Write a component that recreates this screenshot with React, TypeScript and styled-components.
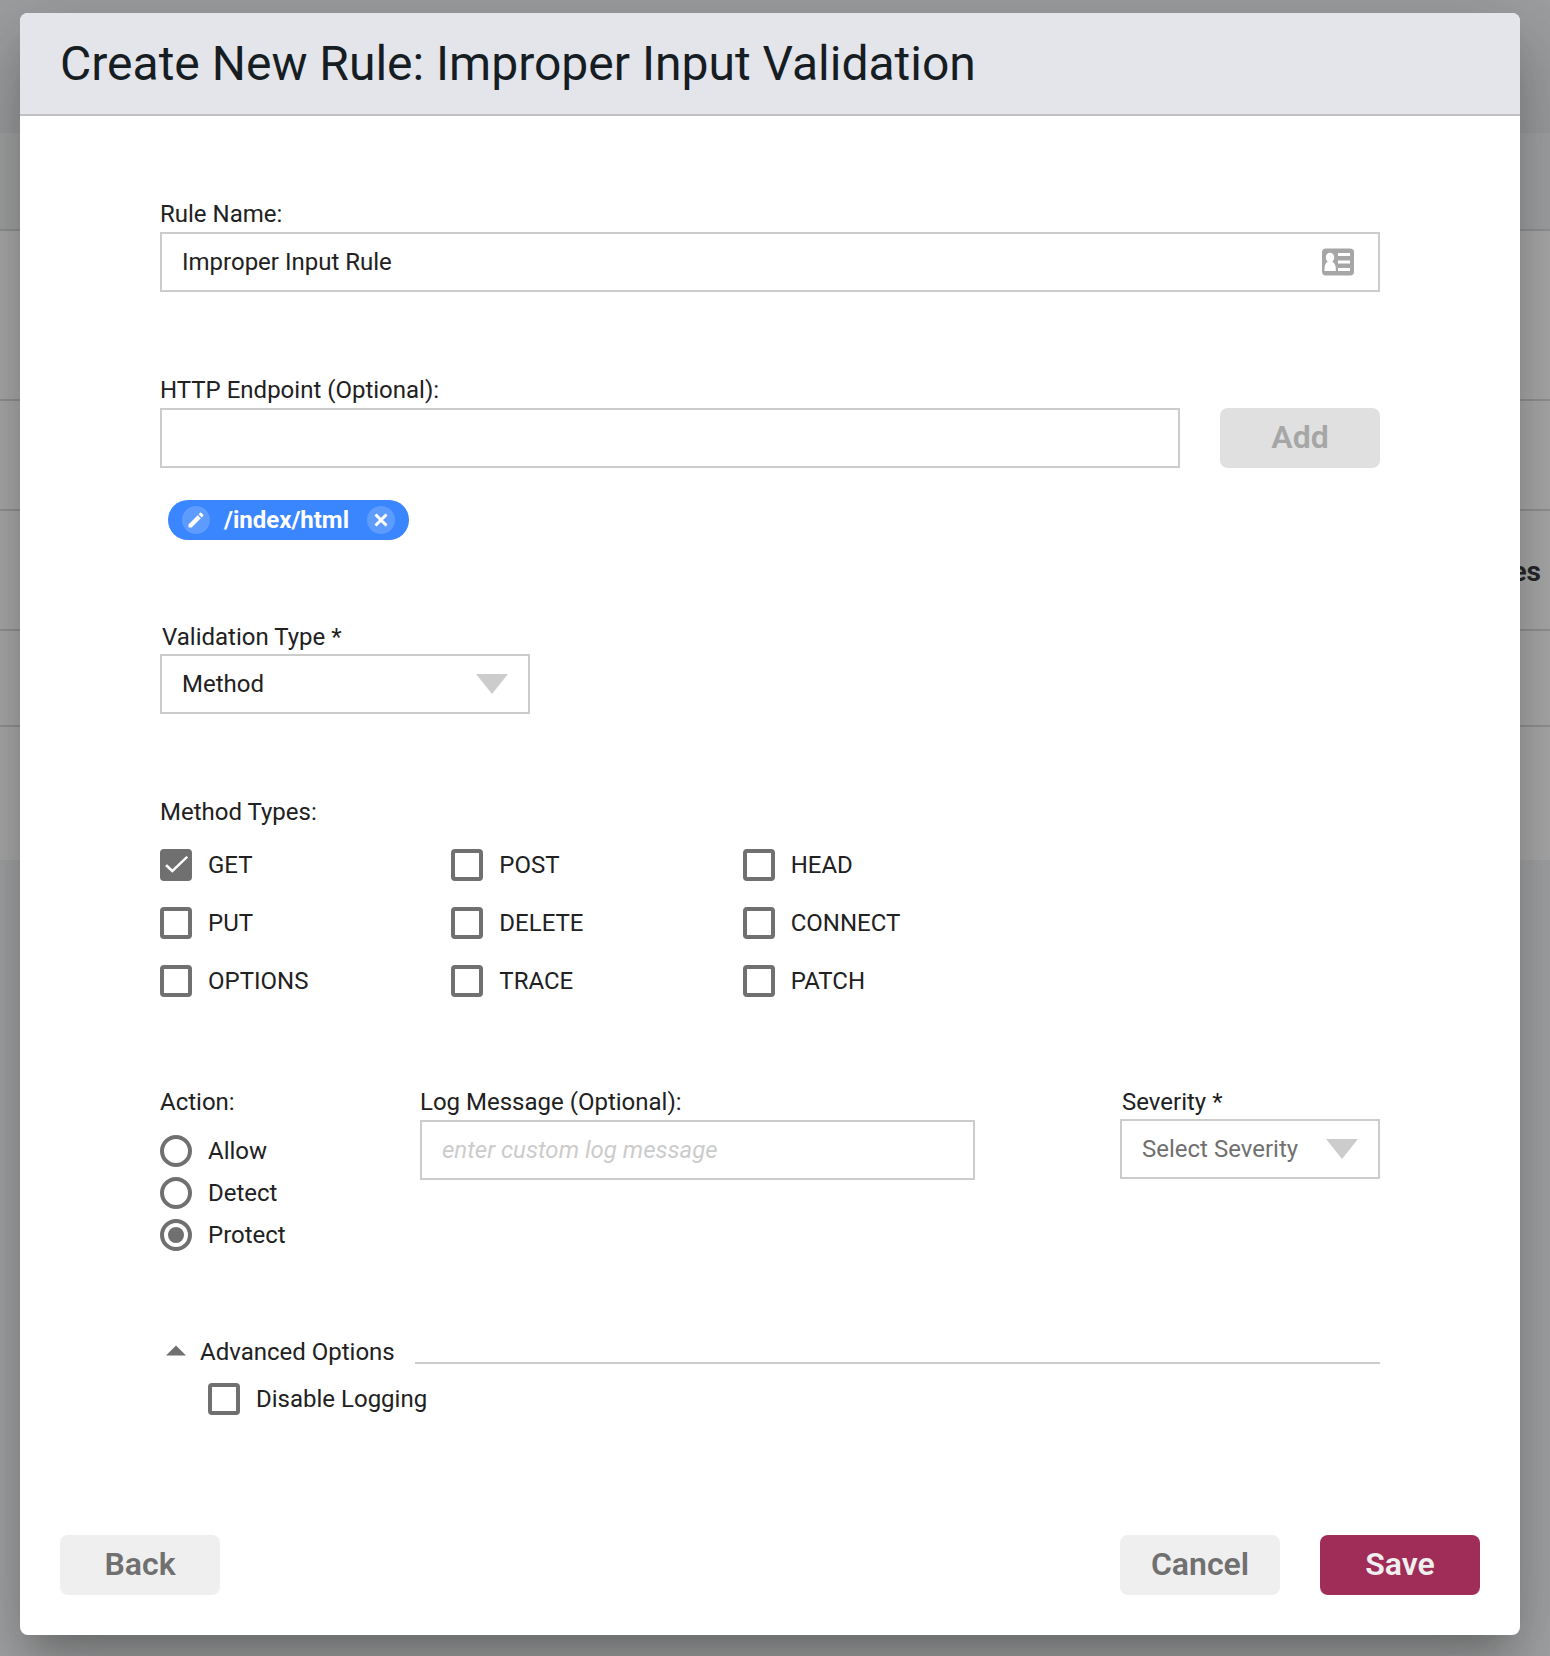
import React, { useState } from "react";
import styled, { createGlobalStyle } from "styled-components";

const color = {
  text: "#212121",
  control: "#707070",
  line: "#cccccc",
  accent: "#a02c58",
  chip: "#3a86ff",
};

const GlobalStyle = createGlobalStyle`
  *, *::before, *::after { box-sizing: border-box; }
  body { margin: 0; background: #9b9b9c; }
  body, button, input, select {
    font-family: Roboto, "Liberation Sans", sans-serif;
    font-size: 24px;
    line-height: 28px;
    color: ${color.text};
  }
`;

/* The page and the dialog share one grid cell, the dialog on top. */
const Shell = styled.div`
  display: grid;
  min-height: 100vh;
  overflow: hidden;
  > * { grid-area: 1 / 1; min-width: 0; }
`;

const Page = styled.div`
  background: #f4f5f7;
`;

const TopBar = styled.div`
  height: 133px;
  background: #e9eaed;
`;

const SubBar = styled.div`
  height: 98px;
  background: #f2f3f5;
  border-bottom: 2px solid #dcdcdc;
`;

const ListRow = styled.div<{ $height: number }>`
  display: flex;
  align-items: center;
  justify-content: flex-end;
  height: ${(p) => p.$height}px;
  padding: 4px 9px 0 0;
  background: #fff;
  border-bottom: 2px solid #dcdcdc;
  color: #3c3c41;
  font-size: 28px;
  font-weight: 700;
  &:last-child { border-bottom: 0; }
`;

const Backdrop = styled.div`
  padding: 13px 30px 21px 20px;
  background: rgba(0, 0, 0, 0.32);
`;

const Dialog = styled.form`
  border-radius: 8px;
  background: #fff;
  box-shadow:
    0 22px 30px -14px rgba(0, 0, 0, 0.2),
    0 48px 76px 6px rgba(0, 0, 0, 0.14),
    0 18px 92px 16px rgba(0, 0, 0, 0.12);
`;

const Header = styled.header`
  padding: 23px 40px 22px;
  border-bottom: 2px solid #c0c0c3;
  border-radius: 8px 8px 0 0;
  background: #e4e5eb;
`;

const Title = styled.h1`
  margin: 0;
  font-size: 48px;
  line-height: 56px;
  font-weight: 400;
  color: #161d23;
`;

const Body = styled.div`
  padding: 84px 140px 120px;
`;

const Section = styled.section<{ $space?: number }>`
  margin-bottom: ${(p) => p.$space ?? 84}px;
`;

const Row = styled.div`
  display: flex;
  align-items: flex-end;
  gap: 40px;
`;

const Field = styled.div<{ $gap?: number }>`
  display: flex;
  flex: 1;
  flex-direction: column;
  gap: ${(p) => p.$gap ?? 4}px;
  min-width: 0;
`;

const SelectField = styled(Field)<{ $width: number }>`
  flex: none;
  width: ${(p) => p.$width}px;
`;

const Label = styled.label`
  display: block;
`;

const SelectLabel = styled(Label)`
  padding-left: 2px;
`;

const InputFrame = styled.div`
  display: flex;
  align-items: center;
  height: 60px;
  padding: 0 24px 0 20px;
  border: 2px solid ${color.line};
`;

const TextInput = styled.input`
  flex: 1;
  min-width: 0;
  padding: 0;
  border: 0;
  outline: 0;
  background: none;
  &::placeholder {
    color: ${color.line};
    font-style: italic;
    opacity: 1;
  }
`;

const SelectFrame = styled.div`
  display: grid;
  align-items: center;
  > * { grid-area: 1 / 1; }
  > svg {
    justify-self: end;
    margin-right: 22px;
    pointer-events: none;
  }
`;

const NativeSelect = styled.select<{ $muted?: boolean }>`
  width: 100%;
  height: 60px;
  padding: 0 60px 0 20px;
  border: 2px solid ${color.line};
  border-radius: 0;
  outline: 0;
  background: none;
  appearance: none;
  ${(p) => p.$muted && `color: ${color.control};`}
`;

const Button = styled.button<{ $kind?: "primary" }>`
  width: 160px;
  height: 60px;
  padding: 0 0 2px;
  border: 0;
  border-radius: 8px;
  font-size: 32px;
  font-weight: 600;
  line-height: 38px;
  background: ${(p) => (p.$kind === "primary" ? color.accent : "#efefef")};
  color: ${(p) => (p.$kind === "primary" ? "#efefef" : color.control)};
  &:disabled {
    background: #e0e0e0;
    color: #a6a6a6;
  }
`;

const ChipList = styled.div`
  display: flex;
  padding: 32px 8px 0;
`;

const Chip = styled.div`
  display: flex;
  align-items: center;
  height: 40px;
  padding: 0 14px;
  border-radius: 20px;
  background: ${color.chip};
  color: #fff;
  font-weight: 700;
`;

const ChipText = styled.span`
  margin: 0 18px 0 14px;
`;

const ChipButton = styled.button`
  display: grid;
  place-items: center;
  width: 28px;
  height: 28px;
  padding: 0;
  border: 0;
  border-radius: 50%;
  background: rgba(255, 255, 255, 0.18);
  color: #fff;
`;

const Group = styled.fieldset`
  min-width: 0;
  margin: 0;
  padding: 0;
  border: 0;
`;

const Legend = styled.legend`
  padding: 0;
`;

const MethodGrid = styled.div`
  display: grid;
  grid-template-columns: repeat(3, 1fr);
  row-gap: 26px;
  max-width: 874px;
  margin-top: 23px;
`;

const RadioList = styled.div`
  display: grid;
  row-gap: 10px;
  margin-top: 19px;
`;

const Option = styled.label`
  display: flex;
  align-items: center;
  gap: 16px;
`;

const checkMark = "polygon(4% 54%, 12% 47%, 32% 68%, 86% 12%, 93% 19%, 32% 82%)";

const Checkbox = styled.input`
  display: grid;
  place-items: center;
  width: 32px;
  height: 32px;
  margin: 0;
  border: 4px solid ${color.control};
  border-radius: 4px;
  appearance: none;
  &:checked { background: ${color.control}; }
  &:checked::before {
    content: "";
    width: 26px;
    height: 24px;
    background: #fff;
    clip-path: ${checkMark};
  }
`;

const Radio = styled.input`
  display: grid;
  place-items: center;
  width: 32px;
  height: 32px;
  margin: 0;
  border: 4px solid ${color.control};
  border-radius: 50%;
  appearance: none;
  &:checked::before {
    content: "";
    width: 16px;
    height: 16px;
    border-radius: 50%;
    background: ${color.control};
  }
`;

const ActionRow = styled.div`
  display: flex;
  align-items: flex-start;
`;

const ActionGroup = styled(Group)`
  width: 260px;
`;

const SeverityField = styled(SelectField)`
  margin-left: 145px;
`;

const AdvancedHead = styled.div`
  display: flex;
  gap: 20px;
`;

const Disclosure = styled.button`
  display: flex;
  align-items: center;
  gap: 14px;
  padding: 0 0 0 6px;
  border: 0;
  background: none;
`;

const Rule = styled.div`
  flex: 1;
  height: 26px;
  border-bottom: 2px solid ${color.line};
`;

const AdvancedBody = styled.div`
  padding: 17px 48px 0;
`;

const Footer = styled.footer`
  display: flex;
  gap: 40px;
  padding: 0 40px 40px;
  > :first-child { margin-right: auto; }
`;

const Arrow = () => (
  <svg width="32" height="20" viewBox="0 0 32 20" aria-hidden="true">
    <path d="M0 0h32L16 20z" fill={color.line} />
  </svg>
);

const ContactIcon = () => (
  <svg width="32" height="28" viewBox="0 0 32 28" aria-hidden="true">
    <rect width="32" height="27" y=".5" rx="4" fill="#a6a6a6" />
    <ellipse cx="8" cy="9.500" rx="4.200" ry="4.800" fill="#fff" />
    <path d="M2.500 23v-2.500c0-3.500 1.500-6 3.500-7h4c2 1 3.800 3.500 3.800 7V23z" fill="#fff" />
    <path d="M16 5h12v3H16zM16 12.500h12v3H16zM16 20h12v3H16z" fill="#fff" />
  </svg>
);

const PencilIcon = () => (
  <svg width="20" height="20" viewBox="0 0 24 24" aria-hidden="true">
    <path
      fill="currentColor"
      d="M3 17.250V21h3.750L17.810 9.940l-3.750-3.750L3 17.250zM20.710 7.040a1 1 0 0 0 0-1.410l-2.340-2.340a1 1 0 0 0-1.410 0l-1.830 1.830 3.750 3.750 1.830-1.830z"
    />
  </svg>
);

const CloseIcon = () => (
  <svg width="14" height="14" viewBox="0 0 14 14" aria-hidden="true">
    <path d="M1.500 1.500l11 11M12.500 1.500l-11 11" stroke="currentColor" strokeWidth="3" />
  </svg>
);

const methods = ["GET", "POST", "HEAD", "PUT", "DELETE", "CONNECT", "OPTIONS", "TRACE", "PATCH"];
const actions = ["Allow", "Detect", "Protect"];

export default function App() {
  const [name, setName] = useState("Improper Input Rule");
  const [endpoint, setEndpoint] = useState("");
  const [endpoints, setEndpoints] = useState(["/index/html"]);
  const [open, setOpen] = useState(true);

  const remove = (path: string) => setEndpoints(endpoints.filter((e) => e !== path));
  const add = () => {
    setEndpoints([...endpoints, endpoint]);
    setEndpoint("");
  };

  return (
    <>
      <GlobalStyle />
      <Shell>
        <Page>
          <TopBar />
          <SubBar />
          <ListRow $height={170} />
          <ListRow $height={110} />
          <ListRow $height={120}>es</ListRow>
          <ListRow $height={96} />
          <ListRow $height={133} />
        </Page>
        <Backdrop>
          <Dialog role="dialog" aria-labelledby="title" onSubmit={(e) => e.preventDefault()}>
            <Header>
              <Title id="title">Create New Rule: Improper Input Validation</Title>
            </Header>
            <Body>
              <Section>
                <Field>
                  <Label htmlFor="name">Rule Name:</Label>
                  <InputFrame>
                    <TextInput id="name" value={name} onChange={(e) => setName(e.target.value)} />
                    <ContactIcon />
                  </InputFrame>
                </Field>
              </Section>

              <Section $space={83}>
                <Row>
                  <Field>
                    <Label htmlFor="endpoint">HTTP Endpoint (Optional):</Label>
                    <InputFrame>
                      <TextInput
                        id="endpoint"
                        value={endpoint}
                        onChange={(e) => setEndpoint(e.target.value)}
                      />
                    </InputFrame>
                  </Field>
                  <Button type="button" disabled={!endpoint} onClick={add}>
                    Add
                  </Button>
                </Row>
                <ChipList>
                  {endpoints.map((path) => (
                    <Chip key={path}>
                      <ChipButton type="button" aria-label={`Edit ${path}`} onClick={() => setEndpoint(path)}>
                        <PencilIcon />
                      </ChipButton>
                      <ChipText>{path}</ChipText>
                      <ChipButton type="button" aria-label={`Remove ${path}`} onClick={() => remove(path)}>
                        <CloseIcon />
                      </ChipButton>
                    </Chip>
                  ))}
                </ChipList>
              </Section>

              <Section>
                <SelectField $gap={3} $width={370}>
                  <SelectLabel htmlFor="validation">Validation Type *</SelectLabel>
                  <SelectFrame>
                    <NativeSelect id="validation">
                      <option>Method</option>
                    </NativeSelect>
                    <Arrow />
                  </SelectFrame>
                </SelectField>
              </Section>

              <Section $space={91}>
                <Group>
                  <Legend>Method Types:</Legend>
                  <MethodGrid>
                    {methods.map((m) => (
                      <Option key={m}>
                        <Checkbox type="checkbox" defaultChecked={m === "GET"} />
                        {m}
                      </Option>
                    ))}
                  </MethodGrid>
                </Group>
              </Section>

              <Section $space={87}>
                <ActionRow>
                  <ActionGroup>
                    <Legend>Action:</Legend>
                    <RadioList>
                      {actions.map((a) => (
                        <Option key={a}>
                          <Radio type="radio" name="action" defaultChecked={a === "Protect"} />
                          {a}
                        </Option>
                      ))}
                    </RadioList>
                  </ActionGroup>
                  <Field>
                    <Label htmlFor="log">Log Message (Optional):</Label>
                    <InputFrame>
                      <TextInput id="log" placeholder="enter custom log message" />
                    </InputFrame>
                  </Field>
                  <SeverityField $gap={3} $width={260}>
                    <SelectLabel htmlFor="severity">Severity *</SelectLabel>
                    <SelectFrame>
                      <NativeSelect id="severity" $muted>
                        <option>Select Severity</option>
                      </NativeSelect>
                      <Arrow />
                    </SelectFrame>
                  </SeverityField>
                </ActionRow>
              </Section>

              <AdvancedHead>
                <Disclosure type="button" aria-expanded={open} onClick={() => setOpen(!open)}>
                  <svg width="20" height="14" viewBox="0 0 20 14" aria-hidden="true">
                    <path d="M0 10.500L10 .5l10 10z" fill={color.control} />
                  </svg>
                  Advanced Options
                </Disclosure>
                <Rule />
              </AdvancedHead>
              {open && (
                <AdvancedBody>
                  <Option>
                    <Checkbox type="checkbox" />
                    Disable Logging
                  </Option>
                </AdvancedBody>
              )}
            </Body>
            <Footer>
              <Button type="button">Back</Button>
              <Button type="button">Cancel</Button>
              <Button type="submit" $kind="primary">
                Save
              </Button>
            </Footer>
          </Dialog>
        </Backdrop>
      </Shell>
    </>
  );
}
